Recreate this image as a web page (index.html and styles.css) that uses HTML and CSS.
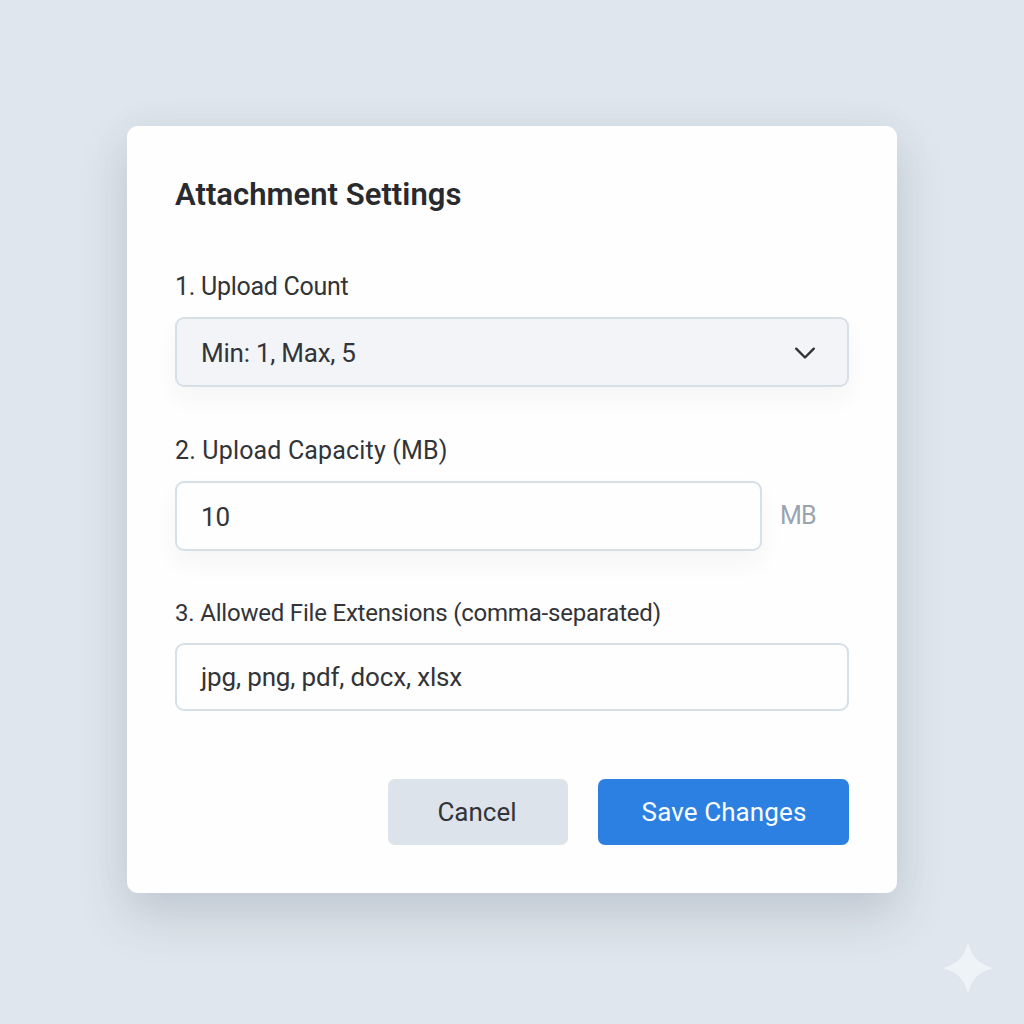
FILE: index.html
```html
<!DOCTYPE html>
<html lang="en">
<head>
<meta charset="utf-8">
<title>Attachment Settings</title>
<link rel="stylesheet" href="styles.css">
</head>
<body>
<main class="card">
  <h1 class="title">Attachment Settings</h1>
  <section class="field count">
    <div class="label">1. Upload Count</div>
    <div class="control select raised"><span>Min: 1, Max, 5</span>
      <svg class="chevron" width="22" height="14" viewBox="0 0 22 14"><path d="M2.2 2.700 11 11.500 19.800 2.700"/></svg>
    </div>
  </section>
  <section class="field capacity">
    <div class="label">2. Upload Capacity (MB)</div>
    <div class="row"><div class="control raised"><span>10</span></div><span class="unit">MB</span></div>
  </section>
  <section class="field extensions">
    <div class="label">3. Allowed File Extensions (comma-separated)</div>
    <div class="control"><span>jpg, png, pdf, docx, xlsx</span></div>
  </section>
  <footer class="actions">
    <button class="button cancel">Cancel</button>
    <button class="button save">Save Changes</button>
  </footer>
</main>
<svg class="sparkle" width="48" height="48" viewBox="0 0 48 48"><path d="M24 0C25 0 25 2 25.600 4C29 13 35 19 44 22.400C46 23 48 23 48 24C48 25 46 25 44 25.600C35 29 29 35 25.600 44C25 46 25 48 24 48C23 48 23 46 22.400 44C19 35 13 29 4 25.600C2 25 0 25 0 24C0 23 2 23 4 22.400C13 19 19 13 22.400 4C23 2 23 0 24 0Z"/></svg>
</body>
</html>
```
FILE: styles.css
```css
* { box-sizing: border-box; }
body {
  margin: 0;
  min-height: 1024px;
  padding: 126px 127px 0;
  background: #dfe6ed;
  color: #323438;
  font-family: Roboto, "Liberation Sans", sans-serif;
}
.card {
  height: 766.5px;
  padding: 48px 48px 0;
  border-radius: 11px;
  background: #fefefe;
  box-shadow: 0 24px 50px rgba(65, 80, 95, 0.17), 0 2px 40px rgba(80, 100, 120, 0.06);
}
.title {
  margin: 0;
  height: 97px;
  padding-top: 1px;
  font-size: 31px;
  line-height: 40px;
  font-weight: 600;
  letter-spacing: 0.03px;
  color: #282a2e;
}
.label { height: 46px; font-size: 25px; line-height: 32px; white-space: nowrap; }
.count .label { letter-spacing: -0.28px; }
.capacity .label { letter-spacing: 0.16px; }
.control {
  display: flex;
  align-items: center;
  justify-content: space-between;
  height: 70px;
  padding: 0 24px;
  border: 2px solid #d7dfe7;
  border-radius: 9px;
  background: #fefefe;
  font-size: 26px;
}
.raised { padding-top: 2px; box-shadow: 0 12px 24px rgba(40, 50, 60, 0.045); }
.select { padding-right: 31px; background: #f2f4f7; letter-spacing: -0.25px; }
.chevron { fill: none; stroke: #303236; stroke-width: 2.4; stroke-linecap: round; stroke-linejoin: round; }
.count { height: 164px; }
.capacity { height: 163px; }
.row { display: flex; align-items: center; gap: 18.500px; }
.row .control { width: 586.5px; }
.unit { padding-bottom: 1px; font-size: 25px; letter-spacing: -0.8px; color: #99a4b0; }
.extensions { height: 181px; }
.extensions .label { height: 45px; font-size: 24px; line-height: 31px; letter-spacing: -0.2px; }
.extensions .control { height: 68px; letter-spacing: -0.16px; }
.actions { display: flex; justify-content: flex-end; gap: 30px; }
.button {
  height: 66px;
  padding: 0;
  border: 0;
  border-radius: 7px;
  color: inherit;
  font: 400 26px Roboto, "Liberation Sans", sans-serif;
}
.cancel { width: 180px; padding-right: 2px; background: #dde3ea; }
.save { width: 251px; padding-left: 1px; background: #2b80e2; color: #fafcff; letter-spacing: 0.1px; }
.sparkle { position: absolute; left: 944px; top: 944px; fill: #eef3f7; }
```
